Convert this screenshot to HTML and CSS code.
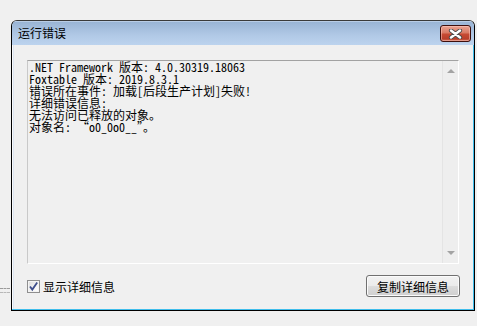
FILE: index.html
```html
<html>
    <head>
        <title>运行错误</title>
        <link rel="stylesheet" href="styles.css">
    </head>
    <body>
        <div class="bg-mark"></div>

        <div class="window">
            <div class="titlebar">
                <span class="title">运行错误</span>
                <div class="close">
                    <svg width="15" height="10" viewBox="0 0 15 10">
                        <path d="M3 1.5 L12 8.5 M12 1.5 L3 8.5" stroke="#4a4a4a" stroke-width="4.2" stroke-linecap="round"/>
                        <path d="M3 1.5 L12 8.5 M12 1.5 L3 8.5" stroke="#ffffff" stroke-width="2.4" stroke-linecap="round"/>
                    </svg>
                </div>
            </div>

            <div class="client">
                <div class="textbox">
                    <div class="log">
                        <div class="line">.NET Framework 版本: 4.0.30319.18063</div>
                        <div class="line">Foxtable 版本: 2019.8.3.1</div>
                        <div class="line">错误所在事件: 加载[后段生产计划]失败!</div>
                        <div class="line">详细错误信息:</div>
                        <div class="line">无法访问已释放的对象。</div>
                        <div class="line">对象名: “o0_0o0__”。</div>
                    </div>
                    <div class="vscroll">
                        <span class="arrow up"></span>
                        <span class="arrow down"></span>
                    </div>
                </div>

                <div class="footer">
                    <label class="check">
                        <span class="box">
                            <svg width="11" height="11" viewBox="0 0 11 11">
                                <path d="M2 5.5 L4.3 8.6 L9.2 1.6" fill="none" stroke="#3f4f8c" stroke-width="1.8"/>
                            </svg>
                        </span>
                        显示详细信息
                    </label>
                    <button class="btn">复制详细信息</button>
                </div>
            </div>
        </div>
    </body>
</html>
```

FILE: styles.css
```css
html, body {
    margin: 0;
    padding: 0;
}

body {
    background: #f0f0f0;
    width: 477px;
    height: 326px;
    overflow: hidden;
    position: relative;
    font-family: "Noto Sans CJK SC", sans-serif;
    font-size: 12px;
}

/* edge of a window that sits behind the dialog */
.bg-mark {
    position: absolute;
    left: 0;
    top: 288px;
    width: 10px;
    height: 3px;
    border-top: 1px dashed #9a9a9a;
    border-bottom: 1px dashed #b8b8b8;
}

.window {
    margin: 20px 0 0 11px;
    width: 462px;
    height: 289px;
    border: 1px solid #000;
    border-top-color: #3a3a3a;
    border-radius: 6px 6px 0 0;
    display: flex;
    flex-direction: column;
    overflow: hidden;
    position: relative;
}

.titlebar {
    height: 24px;
    flex: none;
    display: flex;
    align-items: center;
    justify-content: space-between;
    padding: 0 3px 0 6px;
    background: linear-gradient(#98b3d4, #b1c9e6 60%, #bcd3ee);
    box-shadow: inset 0 1px 0 #b9cde6;
}

.title {
    color: #000;
    font-size: 12px;
    line-height: 12px;
    margin-top: -1px;
}

.close {
    width: 29px;
    height: 15px;
    margin-top: 1px;
    border: 1px solid #3e0f0c;
    border-radius: 3px;
    background: linear-gradient(#eaa392 0%, #d97a64 45%, #c64a33 55%, #b93f2b 85%, #cf6f58 100%);
    box-shadow: inset 0 0 0 1px rgba(255, 205, 195, 0.5);
    display: flex;
    align-items: center;
    justify-content: center;
}

.client {
    flex: 1;
    background: #f0f0f0;
    border-right: 1px solid #3fbdeb;
    border-bottom: 1px solid #3fbdeb;
    box-shadow: inset 1px 0 0 #fbfbfb, inset 2px 0 0 #dde6f2;
    padding: 15px 13px 12px 15px;
    display: flex;
    flex-direction: column;
}

.textbox {
    width: 430px;
    height: 202px;
    border: 1px solid #fff;
    border-top-color: #a2a2a2;
    border-left-color: #c9c9c9;
    display: flex;
    flex: none;
}

.log {
    flex: 1;
    padding: 0 0 0 1px;
    font-family: "Noto Sans Mono CJK SC", "Noto Sans CJK SC", monospace;
    font-size: 12px;
    color: #000;
}

.line {
    white-space: pre;
    height: 12px;
    line-height: 12px;
}

.vscroll {
    width: 15px;
    border-left: 1px solid #e4e4e4;
    background: #eeeeee;
    display: flex;
    flex-direction: column;
    justify-content: space-between;
    align-items: center;
    padding: 8px 0 8px 0;
}

.arrow {
    width: 0;
    height: 0;
    border-left: 4px solid transparent;
    border-right: 4px solid transparent;
}

.arrow.up {
    border-bottom: 4px solid #a3a3a3;
}

.arrow.down {
    border-top: 4px solid #a3a3a3;
}

.footer {
    margin-top: 11px;
    display: flex;
    align-items: center;
    justify-content: space-between;
}

.check {
    display: flex;
    align-items: center;
    gap: 3px;
    color: #000;
    font-size: 12px;
    margin-top: 1px;
}

.box {
    width: 11px;
    height: 11px;
    border: 1px solid #8f8f8f;
    background: linear-gradient(135deg, #d8d8d8, #f6f6f6 60%, #ffffff);
    box-shadow: inset 0 0 0 1px #f4f4f4;
    display: flex;
}

.btn {
    width: 94px;
    height: 22px;
    margin-right: 0;
    padding: 0;
    border: 1px solid #707070;
    border-radius: 3px;
    background: linear-gradient(#f2f2f2 0%, #ebebeb 50%, #dddddd 50%, #cfcfcf 100%);
    box-shadow: inset 0 0 0 1px #fbfbfb;
    font-family: "Noto Sans CJK SC", sans-serif;
    font-size: 12px;
    color: #000;
}
```
